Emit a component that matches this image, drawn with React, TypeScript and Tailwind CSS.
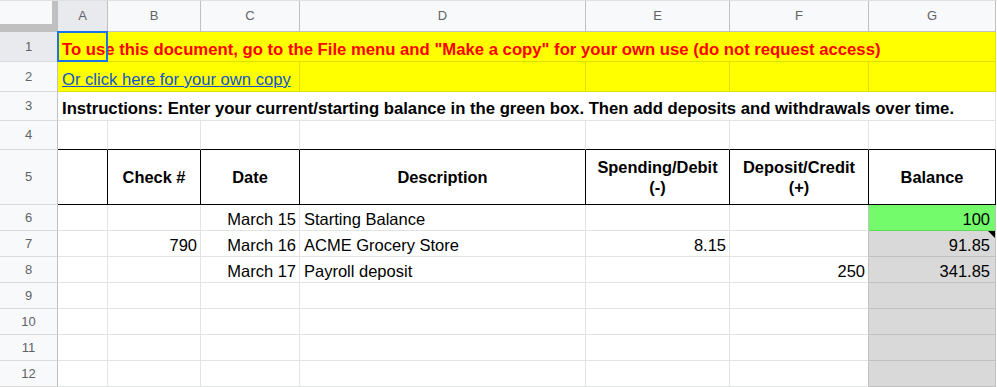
import React from 'react';

const font = { fontFamily: '"Liberation Sans", Arial, sans-serif' };

// column widths: row header, A..G
const GRID = 'grid grid-cols-[58px_50px_93px_99px_286px_144px_139px_127px]';

function RowHead({ n, selected = false }: { n: number; selected?: boolean }) {
  return (
    <div
      className={`flex items-center justify-center border-r border-b border-r-[#c0c0c0] border-b-[#dadada] text-[13px] text-[#5f6368] ${
        selected ? 'bg-[#e8eaed]' : 'bg-[#f8f9fa]'
      }`}
    >
      {n}
    </div>
  );
}

type Cell = { text?: string; align?: 'left' | 'right' };

function DataRow({ n, cells }: { n: number; cells: Cell[] }) {
  // cells: A..G
  return (
    <div className={`${GRID} h-[26px]`}>
      <RowHead n={n} />
      {cells.map((c, i) => {
        const isG = i === 6;
        const isF = i === 5;
        let bg = 'bg-white';
        let border = 'border-[#e2e3e3]';
        if (isG && n === 6) {
          bg = 'bg-[#74fb6b]';
          border = 'border-r-[#c0c0c0] border-b-[#5ed857]';
        } else if (isG) {
          bg = 'bg-[#d9d9d9]';
          border = 'border-[#c0c0c0]';
        } else if (isF && n >= 6) {
          border = 'border-r-[#c0c0c0] border-b-[#e2e3e3]';
        }
        return (
          <div
            key={i}
            className={`relative flex items-end border-r border-b pb-[2px] text-[16.5px] leading-[18px] text-black whitespace-nowrap ${bg} ${border} ${
              c.align === 'right' ? (isG ? 'justify-end pr-[5px]' : 'justify-end pr-[3px]') : 'pl-[4px]'
            }`}
          >
            {c.text}
            {isG && n === 7 && (
              <svg className="absolute top-0 right-0" width="7" height="7" viewBox="0 0 7 7">
                <polygon points="0,0 7,0 7,7" fill="#000" />
              </svg>
            )}
          </div>
        );
      })}
    </div>
  );
}

export default function App() {
  const letters = ['A', 'B', 'C', 'D', 'E', 'F', 'G'];
  const headers: string[][] = [
    [''],
    ['Check #'],
    ['Date'],
    ['Description'],
    ['Spending/Debit', '(-)'],
    ['Deposit/Credit', '(+)'],
    ['Balance'],
  ];

  const rows: { n: number; cells: Cell[] }[] = [
    {
      n: 6,
      cells: [{}, {}, { text: 'March 15', align: 'right' }, { text: 'Starting Balance' }, {}, {}, { text: '100', align: 'right' }],
    },
    {
      n: 7,
      cells: [
        {},
        { text: '790', align: 'right' },
        { text: 'March 16', align: 'right' },
        { text: 'ACME Grocery Store' },
        { text: '8.15', align: 'right' },
        {},
        { text: '91.85', align: 'right' },
      ],
    },
    {
      n: 8,
      cells: [
        {},
        {},
        { text: 'March 17', align: 'right' },
        { text: 'Payroll deposit' },
        {},
        { text: '250', align: 'right' },
        { text: '341.85', align: 'right' },
      ],
    },
    { n: 9, cells: [{}, {}, {}, {}, {}, {}, {}] },
    { n: 10, cells: [{}, {}, {}, {}, {}, {}, {}] },
    { n: 11, cells: [{}, {}, {}, {}, {}, {}, {}] },
    { n: 12, cells: [{}, {}, {}, {}, {}, {}, {}] },
  ];

  return (
    <div className="relative w-[997px] h-[387px] overflow-hidden bg-white" style={font}>
      {/* column letters */}
      <div className={`${GRID} h-[32px] border-t border-t-[#e0e0e0]`}>
        <div className="bg-[#c0c0c0]">
          <div className="w-[52px] h-[23px] bg-[#f8f9fa]" />
        </div>
        {letters.map((l, i) => (
          <div
            key={l}
            className={`flex items-center justify-center border-r border-b border-[#c0c0c0] text-[13px] text-[#5f6368] ${
              i === 0 ? 'bg-[#e8eaed]' : 'bg-[#f8f9fa]'
            }`}
          >
            {l}
          </div>
        ))}
      </div>

      {/* row 1 */}
      <div className={`${GRID} h-[30px]`}>
        <RowHead n={1} selected />
        <div className="col-span-7 flex items-end pb-[2px] pl-[4px] bg-[#ffff00] border-r border-b border-[#e0e000] text-[16.7px] leading-[18px] font-bold text-[#ff0000] whitespace-nowrap">
          To use this document, go to the File menu and "Make a copy" for your own use (do not request access)
        </div>
      </div>

      {/* row 2 */}
      <div className={`${GRID} h-[30px]`}>
        <RowHead n={2} />
        <div className="col-span-3 flex items-end pb-[2px] pl-[4px] bg-[#ffff00] border-r border-b border-[#e0e000] text-[16.6px] leading-[18px] whitespace-nowrap">
          <a href="#" className="text-[#1155cc] underline">
            Or click here for your own copy
          </a>
        </div>
        <div className="bg-[#ffff00] border-r border-b border-[#e0e000]" />
        <div className="bg-[#ffff00] border-r border-b border-[#e0e000]" />
        <div className="bg-[#ffff00] border-r border-b border-[#e0e000]" />
        <div className="bg-[#ffff00] border-r border-b border-[#e0e000]" />
      </div>

      {/* row 3 */}
      <div className={`${GRID} h-[29px]`}>
        <RowHead n={3} />
        <div className="col-span-7 flex items-end pb-[2px] pl-[4px] border-r border-b border-[#e2e3e3] text-[16.7px] leading-[18px] font-bold text-black whitespace-nowrap">
          Instructions: Enter your current/starting balance in the green box. Then add deposits and withdrawals over time.
        </div>
      </div>

      {/* row 4 */}
      <div className={`${GRID} h-[29px]`}>
        <RowHead n={4} />
        {letters.map((l) => (
          <div key={l} className="border-r border-b border-r-[#e2e3e3] border-b-black" />
        ))}
      </div>

      {/* row 5: table header */}
      <div className={`${GRID} h-[55px]`}>
        <RowHead n={5} />
        {headers.map((h, i) => (
          <div
            key={i}
            className="flex flex-col items-center justify-center border-r border-b border-black text-[16.4px] leading-[20px] font-bold text-black text-center"
          >
            {h.map((line, j) => (
              <span key={j}>{line}</span>
            ))}
          </div>
        ))}
      </div>

      {rows.map((r) => (
        <DataRow key={r.n} n={r.n} cells={r.cells} />
      ))}

      {/* selected cell A1 */}
      <div className="absolute left-[57px] top-[31px] w-[51px] h-[31px] border-2 border-[#1a73e8] pointer-events-none" />
    </div>
  );
}
